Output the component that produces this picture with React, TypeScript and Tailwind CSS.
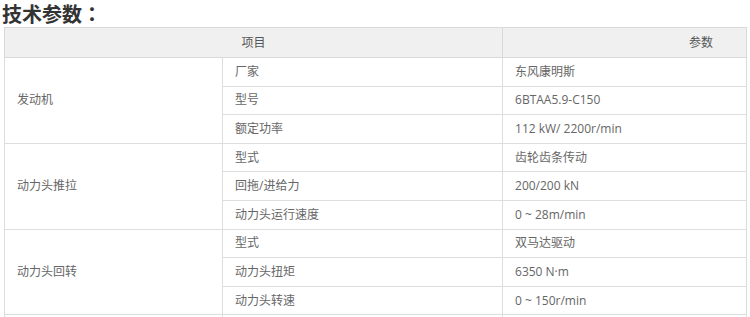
import React from "react";

const groups: { name: string; rows: [string, string][] }[] = [
  {
    name: "发动机",
    rows: [
      ["厂家", "东风康明斯"],
      ["型号", "6BTAA5.9-C150"],
      ["额定功率", "112 kW/ 2200r/min"],
    ],
  },
  {
    name: "动力头推拉",
    rows: [
      ["型式", "齿轮齿条传动"],
      ["回拖/进给力", "200/200 kN"],
      ["动力头运行速度", "0 ~ 28m/min"],
    ],
  },
  {
    name: "动力头回转",
    rows: [
      ["型式", "双马达驱动"],
      ["动力头扭矩", "6350 N·m"],
      ["动力头转速", "0 ~ 150r/min"],
    ],
  },
  {
    name: "",
    rows: [["", ""]],
  },
];

export default function App() {
  return (
    <div
      className="w-[750px] h-[317px] overflow-hidden bg-white"
      style={{ fontFamily: '"Open Sans", "Noto Sans CJK SC", sans-serif' }}
    >
      <h2
        className="pl-[2px] pt-[2px] h-[27px] text-[20px] leading-[24px] font-bold text-[#333]"
        style={{ fontFamily: '"Noto Sans CJK JP", sans-serif' }}
      >
        技术参数：
      </h2>
      <table className="ml-[4px] w-[742px] border-collapse text-[12px] text-[#666] table-fixed">
        <colgroup>
          <col className="w-[218px]" />
          <col className="w-[280px]" />
          <col className="w-[244px]" />
        </colgroup>
        <thead>
          <tr className="h-[30px] bg-[#f0f0f0] text-[#555]">
            <th colSpan={2} className="border border-[#d9d9d9] font-normal text-center">
              项目
            </th>
            <th className="border border-[#d9d9d9] font-normal text-right pr-[33px]">
              参数
            </th>
          </tr>
        </thead>
        <tbody>
          {groups.map((g, gi) =>
            g.rows.map((r, i) => (
              <tr key={gi + "-" + i} className="h-[28.6px]">
                {i === 0 && (
                  <td
                    rowSpan={g.rows.length}
                    className="border border-[#ddd] pl-[12px] align-middle"
                  >
                    {g.name}
                  </td>
                )}
                <td className="border border-[#ddd] pl-[12px]">{r[0]}</td>
                <td className="border border-[#ddd] pl-[12px]">{r[1]}</td>
              </tr>
            ))
          )}
        </tbody>
      </table>
    </div>
  );
}
